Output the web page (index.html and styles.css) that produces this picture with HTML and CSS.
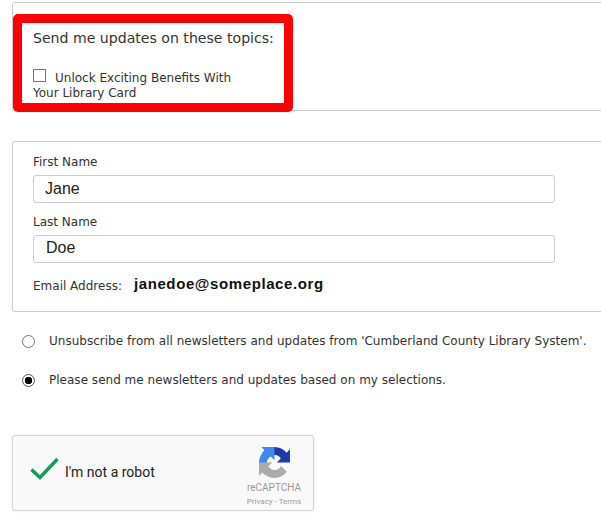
FILE: index.html
```html
<!DOCTYPE html>
<html lang="en">
<head>
    <meta charset="UTF-8">
    <title>Update subscription preferences</title>
    <link rel="stylesheet" href="styles.css">
</head>
<body>
    <section class="panel topics">
        <div class="highlight"></div>
        <p class="topics-title">Send me updates on these topics:</p>
        <label class="topic"><span class="checkbox"></span>Unlock Exciting Benefits With Your Library Card</label>
    </section>

    <section class="panel contact">
        <label class="field-label" for="first-name">First Name</label>
        <input class="field" id="first-name" type="text" value="Jane">
        <label class="field-label" for="last-name">Last Name</label>
        <input class="field field-last" id="last-name" type="text" value="Doe">
        <p class="email"><span class="field-label email-label">Email Address:</span><strong>janedoe@someplace.org</strong></p>
    </section>

    <div class="choices">
        <label class="choice"><span class="radio"></span>Unsubscribe from all newsletters and updates from 'Cumberland County Library System'.</label>
        <label class="choice"><span class="radio radio-on"></span>Please send me newsletters and updates based on my selections.</label>
    </div>

    <div class="captcha">
        <svg class="tick" width="30" height="24" viewBox="0 0 30 24">
            <path d="M1.5 12.5 L10 20.5 L27.5 2" fill="none" stroke="#0f9d58" stroke-width="3.4"/>
        </svg>
        <span class="captcha-text">I'm not a robot</span>
        <div class="captcha-brand">
            <svg width="31" height="31" viewBox="0 0 64 64">
                <path d="M64 31.955l-.033-1.37V4.687l-7.16 7.16C50.948 4.674 42.033.093 32.05.093c-10.4 0-19.622 4.96-25.458 12.64l11.736 11.86a15.55 15.55 0 0 1 4.754-5.333c2.05-1.6 4.952-2.906 8.968-2.906.485 0 .86.057 1.135.163 4.976.393 9.288 3.14 11.828 7.124l-8.307 8.307c10.522-.04 22.4-.066 27.295.006" fill="#1c3aa9"/>
                <path d="M31.95.003l-1.37.033H4.687l7.16 7.16C4.674 13.054.093 21.97.093 31.95c0 10.4 4.96 19.622 12.64 25.458l11.86-11.736a15.55 15.55 0 0 1-5.333-4.754c-1.6-2.05-2.906-4.952-2.906-8.968 0-.485.057-.86.163-1.135.393-4.976 3.14-9.288 7.124-11.828l8.307 8.307c-.04-10.522-.066-22.4.006-27.295" fill="#4285f4"/>
                <path d="M.003 32.05l.033 1.37v25.892l7.16-7.16c5.858 7.173 14.774 11.755 24.754 11.755 10.4 0 19.622-4.96 25.458-12.64L45.55 39.405a15.55 15.55 0 0 1-4.754 5.333c-2.05 1.6-4.952 2.906-8.968 2.906-.485 0-.86-.057-1.135-.163-4.976-.393-9.288-3.14-11.828-7.124l8.307-8.307c-10.522.04-22.4.066-27.295-.006" fill="#ababab"/>
            </svg>
            <span class="brand-name">reCAPTCHA</span>
            <span class="brand-links">Privacy - Terms</span>
        </div>
    </div>
</body>
</html>
```

FILE: styles.css
```css
html, body {
    overflow: hidden;
}
body {
    font-family: 'DejaVu Sans', Verdana, sans-serif;
    color: #333;
    margin: 0;
    padding: 2px 0 0 12px;
    width: 589px;
    height: 519px;
    background-color: #fff;
}
.panel {
    position: relative;
    box-sizing: border-box;
    width: 600px;
    border: 1px solid #ccc;
    border-radius: 3px;
    padding-left: 20px;
}
.topics {
    height: 109px;
    padding-top: 20px;
}
.highlight {
    position: absolute;
    left: 0;
    top: 11px;
    width: 280px;
    height: 98px;
    box-sizing: border-box;
    border: 9.5px solid #f00;
    border-radius: 5px;
}
.topics-title {
    margin: 0;
    font-size: 14.1px;
    line-height: 30px;
}
.topic {
    display: block;
    width: 215px;
    margin-top: 16px;
    font-size: 12px;
    line-height: 15px;
}
.checkbox {
    display: inline-block;
    box-sizing: border-box;
    width: 13px;
    height: 13px;
    margin-right: 9px;
    border: 1px solid #767676;
    vertical-align: 0;
}
.contact {
    height: 171px;
    margin-top: 30px;
    padding-top: 13px;
}
.field-label {
    display: block;
    font-size: 12px;
    line-height: 15px;
}
.field {
    display: block;
    box-sizing: border-box;
    width: 522px;
    height: 28px;
    margin: 5px 0 12px;
    padding: 0 11px;
    border: 1px solid #ccc;
    border-radius: 3px;
    font-family: 'Liberation Sans', Arial, sans-serif;
    font-size: 16px;
    color: #222;
}
.field-last {
    padding: 0 12px 2px;
}
.email {
    display: flex;
    align-items: flex-start;
    gap: 12px;
    margin: 5px 0 0;
}
.email-label {
    margin-top: 4px;
}
.email strong {
    font-family: 'Liberation Sans', Arial, sans-serif;
    font-size: 15px;
    letter-spacing: 0.6px;
    color: #111;
}
.choices {
    display: flex;
    flex-direction: column;
    gap: 24px;
    margin-top: 22px;
    padding-left: 10px;
}
.choice {
    display: flex;
    align-items: center;
    gap: 14px;
    font-size: 12px;
    line-height: 15px;
    letter-spacing: 0.015px;
    white-space: nowrap;
}
.radio {
    box-sizing: border-box;
    width: 13px;
    height: 13px;
    border: 1px solid #767676;
    border-radius: 50%;
    background-color: #fff;
}
.radio-on {
    border-color: #555;
    background: radial-gradient(circle, #000 0 3.5px, #fff 4px);
}
.captcha {
    display: flex;
    align-items: center;
    box-sizing: border-box;
    width: 302px;
    height: 76px;
    margin-top: 47px;
    border: 1px solid #d3d3d3;
    border-radius: 3px;
    background-color: #f9f9f9;
    box-shadow: 0 0 3px rgba(0, 0, 0, 0.08);
    font-family: Roboto, 'Liberation Sans', sans-serif;
}
.tick {
    margin: -8px 0 0 17px;
}
.captcha-text {
    margin: -2px 0 0 5px;
    font-size: 14px;
    color: #222;
}
.captcha-brand {
    display: flex;
    flex-direction: column;
    align-items: center;
    align-self: flex-start;
    width: 70px;
    margin: 11px 4px 0 auto;
    color: #999;
}
.brand-name {
    margin-top: 3px;
    font-size: 10px;
    line-height: 14px;
}
.brand-links {
    font-size: 8px;
    line-height: 13px;
}
```
